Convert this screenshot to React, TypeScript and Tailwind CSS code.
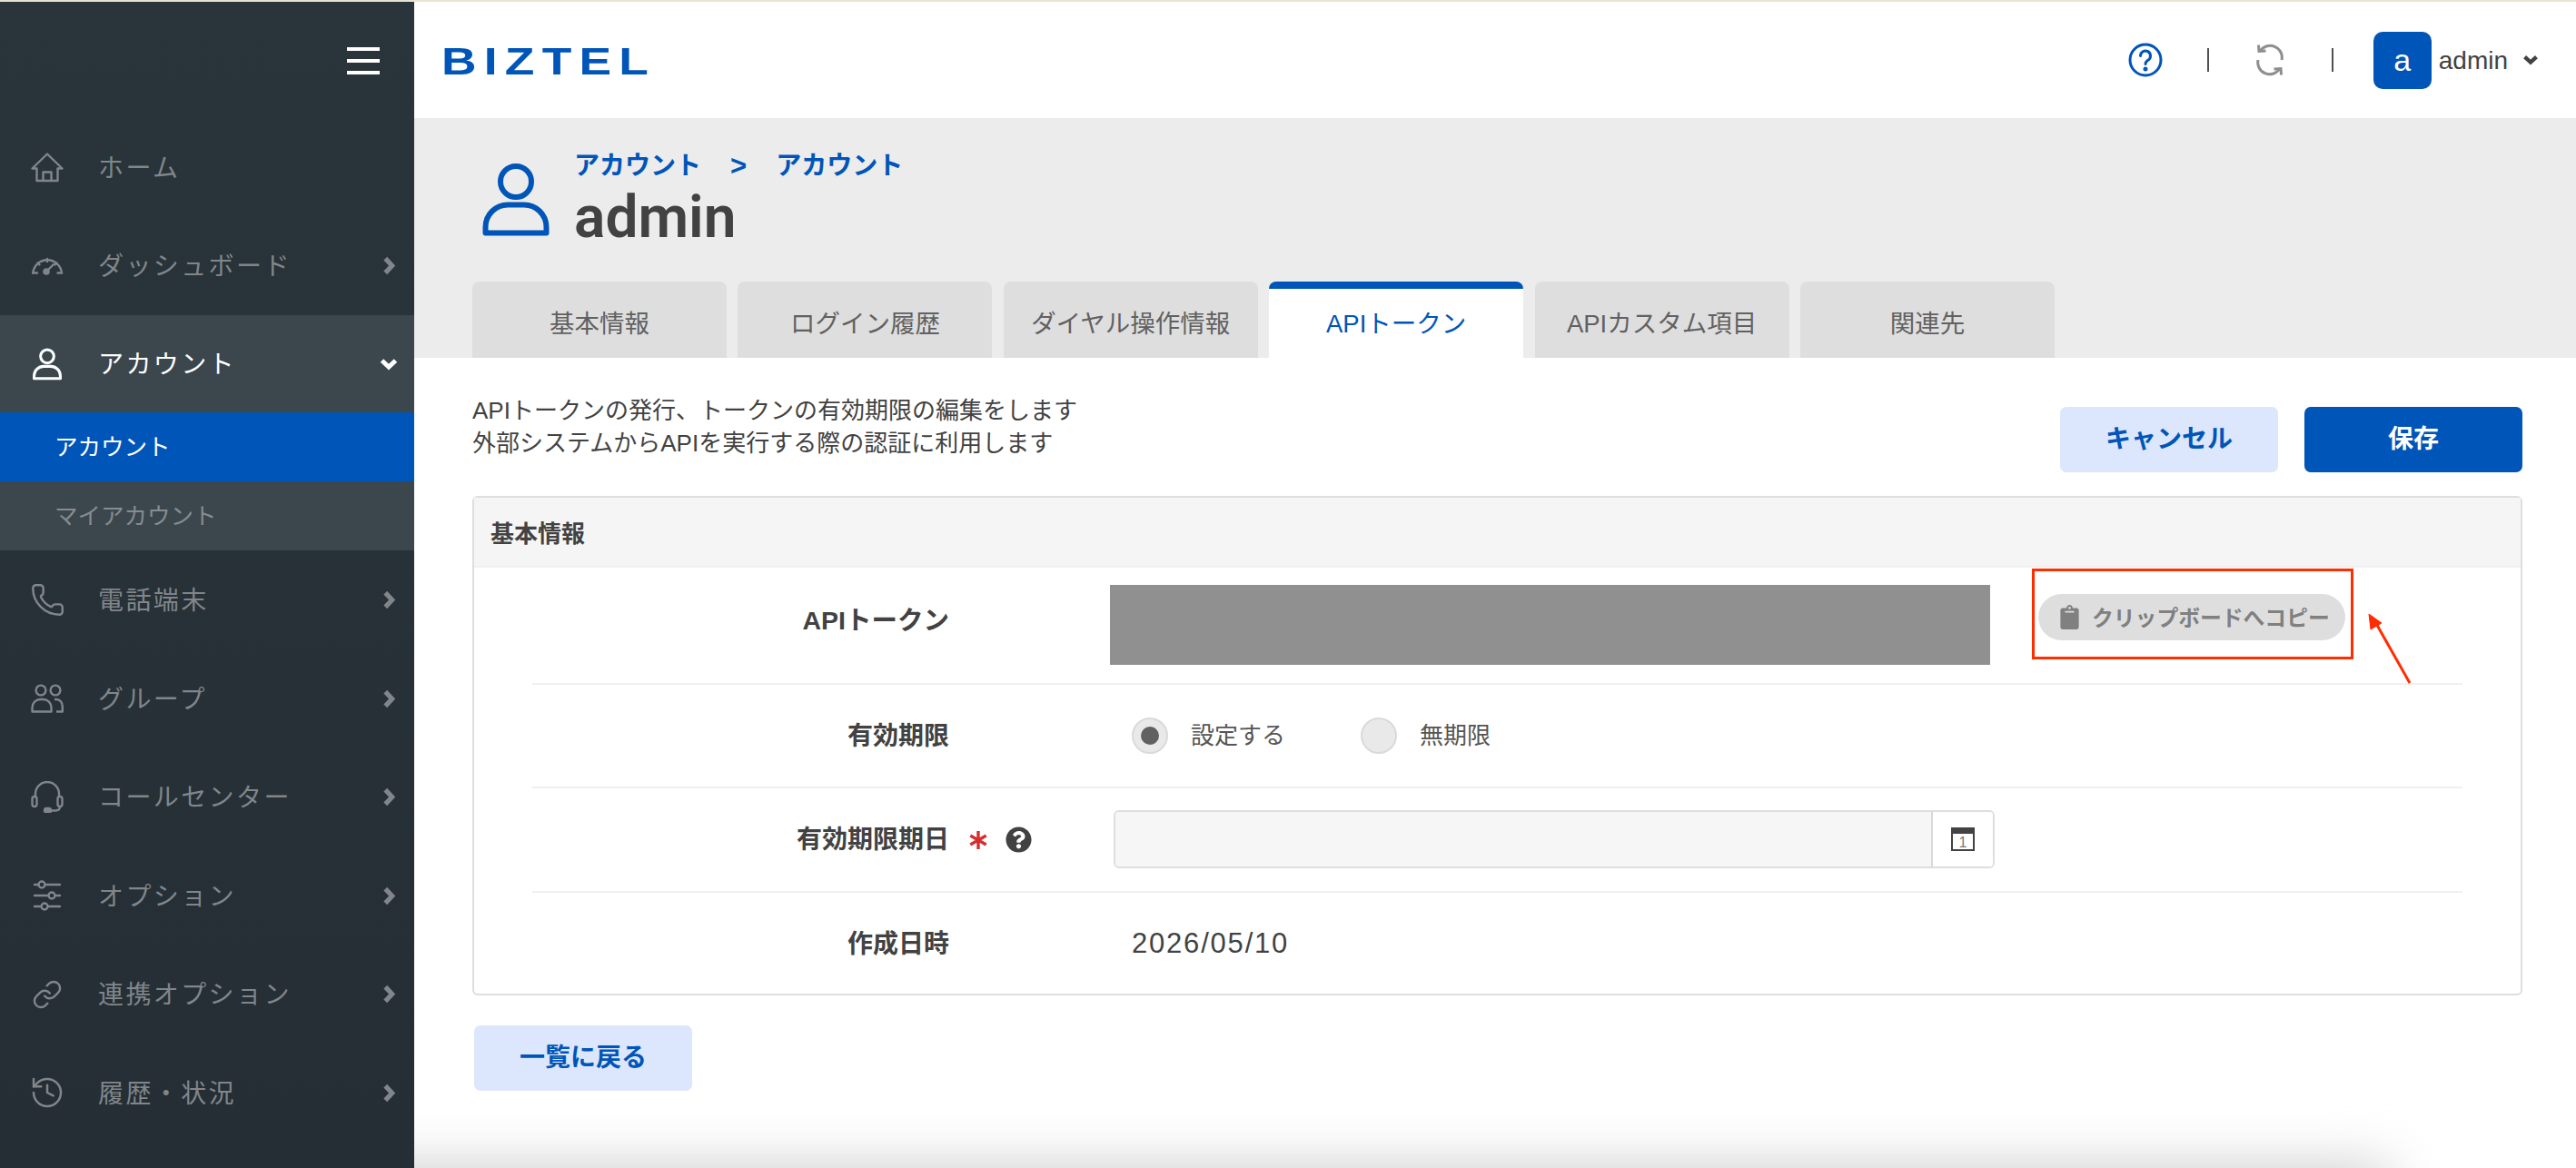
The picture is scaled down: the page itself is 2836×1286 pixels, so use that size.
import type { ReactNode } from "react";
import { History, Link, Phone } from "lucide-react";
import { FaClipboard, FaQuestionCircle } from "react-icons/fa";

const BLUE = "#0055b8";

function HomeIcon() {
  return (
    <svg width="36" height="33" viewBox="0 0 36 33" fill="none" stroke="currentColor" strokeWidth="2.4" strokeLinejoin="round">
      <path d="M1.5 17.5 18 1.5l16.5 16h-5V31h-23V17.5z" />
      <path d="M13.5 31V21.5h9V31" />
    </svg>
  );
}

function GaugeIcon() {
  return (
    <svg width="36" height="20" viewBox="0 0 36 20" fill="none" stroke="currentColor" strokeWidth="2.4" strokeLinecap="round">
      <path d="M7 17.5H2.2A16 16 0 0 1 34 17.5h-4.5" />
      <path d="M18 2v3M7.5 6.5l2 2M28.5 6.5l-2 2M18 15l7-7" />
      <circle cx="17" cy="16" r="2.6" fill="currentColor" />
    </svg>
  );
}

function UserIcon({ className, strokeWidth = 6 }: { className: string; strokeWidth?: number }) {
  return (
    <svg className={className} viewBox="0 0 74 80" fill="none" stroke="currentColor" strokeWidth={strokeWidth} strokeLinejoin="round">
      <circle cx="37" cy="20" r="17" />
      <path d="M3.5 76.5V70C3.5 56 15 45.5 28 45.5h18C59 45.5 70.5 56 70.5 70v6.5z" />
    </svg>
  );
}

function GroupIcon() {
  return (
    <svg width="36" height="32" viewBox="0 0 36 32" fill="none" stroke="currentColor" strokeWidth="2.4" strokeLinejoin="round">
      <circle cx="11" cy="7" r="5.4" />
      <circle cx="27" cy="7" r="5.4" />
      <path d="M1.5 30.5V26c0-5 4-9 9-9h3c5 0 9 4 9 9v4.5z" />
      <path d="M26 17h2c4 0 6.8 3.5 6.8 8v5.5H28" />
    </svg>
  );
}

function HeadsetIcon() {
  return (
    <svg width="36" height="35" viewBox="0 0 36 35" fill="none" stroke="currentColor" strokeWidth="2.4" strokeLinecap="round">
      <path d="M5 17v-3a13 13 0 0 1 26 0v3" />
      <rect x="1.5" y="17" width="5" height="11" rx="2.5" />
      <rect x="29.5" y="17" width="5" height="11" rx="2.5" />
      <path d="M32 28c0 3-2 4.500-5 4.500h-5" />
      <rect x="15" y="30" width="7" height="4.500" rx="2.200" fill="currentColor" />
    </svg>
  );
}

function SlidersIcon() {
  return (
    <svg width="32" height="34" viewBox="0 0 32 34" fill="none" stroke="currentColor" strokeWidth="2.4" strokeLinecap="round">
      <path d="M2 5h4M14 5h16M2 17h14M25 17h5M2 29h6M17 29h13" />
      <circle cx="10" cy="5" r="3.500" />
      <circle cx="21" cy="17" r="3.500" />
      <circle cx="13" cy="29" r="3.500" />
    </svg>
  );
}

function ChevronRight() {
  return (
    <svg width="15" height="21" viewBox="0 0 14 20" fill="none" stroke="currentColor" strokeWidth="5" strokeLinejoin="miter">
      <path d="M3 2.500 10 10l-7 7.500" />
    </svg>
  );
}

function ChevronDown({ className }: { className: string }) {
  return (
    <svg className={className} viewBox="0 0 20 14" fill="none" stroke="currentColor" strokeWidth="5">
      <path d="M2.500 3 10 10l7.500-7" />
    </svg>
  );
}

function NavItem({ icon, label, chevron = true }: { icon: ReactNode; label: string; chevron?: boolean }) {
  return (
    <div className="flex h-[108.6px] items-center text-[#80868a]">
      <div className="flex w-[108px] justify-center pr-[4px]">{icon}</div>
      <span className="flex-1 pt-[3px] text-[28px] tracking-[2.4px]">{label}</span>
      {chevron && (
        <span className="mr-[20px]">
          <ChevronRight />
        </span>
      )}
    </div>
  );
}

function Sidebar() {
  return (
    <aside className="z-10 flex w-[456px] flex-col bg-linear-to-b from-[#2a343b] to-[#252e35]">
      <div className="flex h-[128px] justify-end pr-[38px] pt-[50px]">
        <div className="flex h-[30px] w-[36px] flex-col justify-between">
          <div className="h-[4px] bg-white" />
          <div className="h-[4px] bg-white" />
          <div className="h-[4px] bg-white" />
        </div>
      </div>
      <NavItem icon={<HomeIcon />} label="ホーム" chevron={false} />
      <NavItem icon={<GaugeIcon />} label="ダッシュボード" />
      <div className="flex h-[107px] items-center bg-[#3c464d] text-white">
        <div className="flex w-[108px] justify-center pr-[4px]">
          <UserIcon className="h-[36px] w-[32px]" strokeWidth={7} />
        </div>
        <span className="flex-1 pt-[2px] text-[28px] tracking-[2.4px]">アカウント</span>
        <ChevronDown className="mr-[18px] h-[14px] w-[20px]" />
      </div>
      <div className="flex h-[76px] items-center bg-[#0055b8] pl-[60px] text-[25.5px] text-white">アカウント</div>
      <div className="flex h-[76px] items-center bg-[#3c464d] pl-[60px] text-[25.5px] text-[#868c90]">マイアカウント</div>
      <NavItem icon={<Phone size={39} strokeWidth={1.5} />} label="電話端末" />
      <NavItem icon={<GroupIcon />} label="グループ" />
      <NavItem icon={<HeadsetIcon />} label="コールセンター" />
      <NavItem icon={<SlidersIcon />} label="オプション" />
      <NavItem icon={<Link size={34} strokeWidth={1.7} />} label="連携オプション" />
      <NavItem icon={<History size={40} strokeWidth={1.5} />} label="履歴・状況" />
    </aside>
  );
}

function TopBar() {
  return (
    <header className="flex h-[128px] items-center bg-white pl-[30px] pr-[41px]">
      <span className="mt-[3px] origin-left scale-x-[1.27] text-[42px] leading-none font-bold tracking-[6.5px] text-[#0055b8]">BIZTEL</span>
      <div className="ml-auto flex items-center">
        <svg width="38" height="38" viewBox="0 0 38 38" fill="none" stroke={BLUE} strokeWidth="3" strokeLinecap="round">
          <circle cx="19" cy="19" r="17" />
          <path d="M13.500 14.500a5.500 5.500 0 1 1 8.300 4.700c-1.800 1.100-2.800 2.200-2.800 4.300" />
          <circle cx="19" cy="29" r="1" fill={BLUE} />
        </svg>
        <div className="ml-[49px] h-[26px] w-[2px] bg-[#505050]" />
        <svg className="ml-[51px]" width="32" height="36" viewBox="0 0 32 36" fill="none" stroke="#8e8e8e" strokeWidth="3">
          <path d="M5.500 8A13 13 0 0 1 29 18" />
          <path d="M3.500 1.500 4 8.500l7.500-.5" />
          <path d="M26.500 28A13 13 0 0 1 3 18" />
          <path d="M28.500 34.500 28 27.500l-7.500.5" />
        </svg>
        <div className="ml-[52px] h-[26px] w-[2px] bg-[#505050]" />
        <div className="ml-[44px] flex h-[63px] w-[64px] items-center justify-center rounded-[10px] bg-[#0055b8] text-[34px] text-white">a</div>
        <span className="ml-[8px] pt-[2px] text-[28px] text-[#424242]">admin</span>
        <ChevronDown className="ml-[16px] h-[12px] w-[18px] text-[#424242]" />
      </div>
    </header>
  );
}

const TABS = ["基本情報", "ログイン履歴", "ダイヤル操作情報", "APIトークン", "APIカスタム項目", "関連先"];

function PageHead() {
  return (
    <div className="flex h-[264px] flex-col bg-[#ececec] pl-[64px]">
      <div className="flex pl-[11px] pt-[36px]">
        <UserIcon className="mt-[14px] h-[80px] w-[74px] text-[#0055b8]" />
        <div className="ml-[27px]">
          <div className="flex h-[34px] items-center text-[28px] font-bold text-[#0055b8]">
            <span>アカウント</span>
            <span className="mx-[32px] text-[31px]">&gt;</span>
            <span>アカウント</span>
          </div>
          <div className="mt-[2px] text-[64px] leading-[76px] font-semibold text-[#424242] [font-family:Roboto,sans-serif]">admin</div>
        </div>
      </div>
      <div className="mt-auto flex gap-[12.4px]">
        {TABS.map((t) => (
          <div
            key={t}
            className={
              t === "APIトークン"
                ? "flex h-[84px] w-[280px] items-center justify-center rounded-t-[8px] border-t-[8px] border-[#0055b8] bg-white pt-[2px] text-[27.5px] text-[#0055b8]"
                : "flex h-[84px] w-[280px] items-center justify-center rounded-t-[8px] bg-[#dedede] pt-[10px] text-[27.5px] text-[#616161]"
            }
          >
            {t}
          </div>
        ))}
      </div>
    </div>
  );
}

function Radio({ checked, label }: { checked?: boolean; label: string }) {
  return (
    <div className="flex items-center">
      <div className="flex h-[40px] w-[40px] items-center justify-center rounded-full border-2 border-[#dadada] bg-[#e9e9e9]">
        {checked && <div className="h-[20px] w-[20px] rounded-full bg-[#616161]" />}
      </div>
      <span className="ml-[25px] text-[26px] text-[#555555]">{label}</span>
    </div>
  );
}

function FormRow({ label, aux, children, last, height }: { label: string; aux?: ReactNode; children: ReactNode; last?: boolean; height: string }) {
  return (
    <div className={last ? `flex items-center ${height}` : `flex items-center border-b-2 border-[#f0f0f0] ${height}`}>
      <div className="w-[459px] pt-[1px] text-right text-[28px] font-bold text-[#424242]">{label}</div>
      <div className="flex w-[177px] items-center">{aux}</div>
      {children}
    </div>
  );
}

function Panel() {
  return (
    <section className="mt-[26px] ml-[64px] mr-[59px] h-[550px] rounded-[6px] border-2 border-[#dedede]">
      <div className="flex h-[77px] items-center border-b-2 border-[#f0f0f0] bg-[#f5f5f5] pl-[18px] pt-[5px] text-[26px] font-bold text-[#424242]">基本情報</div>
      <div className="mx-[64px]">
        <div className="flex h-[129px] items-start border-b-2 border-[#f0f0f0] pt-[19px]">
          <div className="mt-[18px] w-[459px] text-right text-[28.5px] font-bold text-[#424242]">APIトークン</div>
          <div className="w-[177px]" />
          <div className="h-[88px] w-[969px] bg-[#909090]" />
          <div className="relative mt-[10px] ml-[53px] flex h-[51px] w-[338px] items-center rounded-full bg-[#dedede] pl-[21px] text-[23.8px] font-bold text-[#808080]">
            <FaClipboard size={27} />
            <span className="ml-[11px] whitespace-nowrap pt-[2px]">クリップボードへコピー</span>
            <div className="absolute left-[-7px] top-[-28px] h-[100px] w-[354px] border-[3px] border-[#ff2d00]" />
          </div>
        </div>
        <FormRow label="有効期限" height="h-[114px]">
          <div className="flex items-center gap-[83px] pl-[24px]">
            <Radio checked label="設定する" />
            <Radio label="無期限" />
          </div>
        </FormRow>
        <FormRow
          label="有効期限期日"
          height="h-[115px]"
          aux={
            <>
              <svg className="ml-[22px]" width="20" height="20" viewBox="0 0 20 20" stroke="#d32f2f" strokeWidth="3.400">
                <path d="M10 0v20M1.300 5l17.400 10M18.700 5 1.300 15" />
              </svg>
              <FaQuestionCircle className="ml-[20px] text-[#424242]" size={29} />
            </>
          }
        >
          <div className="mb-[2px] ml-[4px] flex h-[64px] w-[970px] overflow-hidden rounded-[6px] border-2 border-[#dedede]">
            <div className="flex-1 border-r-2 border-[#d8d8d8] bg-[#f6f6f6]" />
            <div className="flex w-[66px] items-center justify-center bg-white">
              <svg width="26" height="26" viewBox="0 0 26 26">
                <rect x="1" y="1" width="24" height="24" fill="#ffffff" stroke="#424242" strokeWidth="2" />
                <rect x="0" y="0" width="26" height="7" fill="#424242" />
                <text x="13" y="22" textAnchor="middle" fontSize="16" fill="#777777">1</text>
              </svg>
            </div>
          </div>
        </FormRow>
        <FormRow label="作成日時" last height="h-[112px]">
          <span className="pl-[24px] text-[31px] tracking-[1.8px] text-[#424242]">2026/05/10</span>
        </FormRow>
      </div>
    </section>
  );
}

export default function App() {
  return (
    <div className="relative flex h-[1286px] w-[2836px] flex-col overflow-hidden bg-white [font-family:'Liberation_Sans','Noto_Sans_CJK_JP',sans-serif]">
      <div className="h-[2px] bg-[#e9e3d2]" />
      <div className="flex flex-1">
        <Sidebar />
        <main className="flex-1">
          <TopBar />
          <PageHead />
          <div className="mt-[40px] ml-[64px] mr-[59px] flex justify-between">
            <div className="text-[26px] leading-[36px] text-[#424242]">
              <p>APIトークンの発行、トークンの有効期限の編集をします</p>
              <p>外部システムからAPIを実行する際の認証に利用します</p>
            </div>
            <div className="mt-[14px] flex gap-[29px]">
              <button className="h-[72px] w-[240px] rounded-[7px] bg-[#dce6fc] text-[28px] font-bold text-[#0055b8]">キャンセル</button>
              <button className="h-[72px] w-[240px] rounded-[7px] bg-[#0055b8] text-[28px] font-bold text-white">保存</button>
            </div>
          </div>
          <Panel />
          <button className="mt-[33px] ml-[66px] h-[72px] w-[240px] rounded-[7px] bg-[#dce6fc] text-[28px] font-bold text-[#0055b8]">一覧に戻る</button>
        </main>
      </div>
      {/* annotation arrow */}
      <svg className="absolute left-[2600px] top-[669px]" width="60" height="90" viewBox="0 0 60 90" fill="#ff2d00" stroke="#ff2d00">
        <path d="M53 83 14 14" strokeWidth="3" />
        <path d="M8 7 22 17l-12 7z" />
      </svg>
      {/* soft shadow along the bottom edge */}
      <div className="absolute left-[200px] top-[1284px] h-[60px] w-[2430px] bg-[#cccccc] blur-[30px]" />
    </div>
  );
}
